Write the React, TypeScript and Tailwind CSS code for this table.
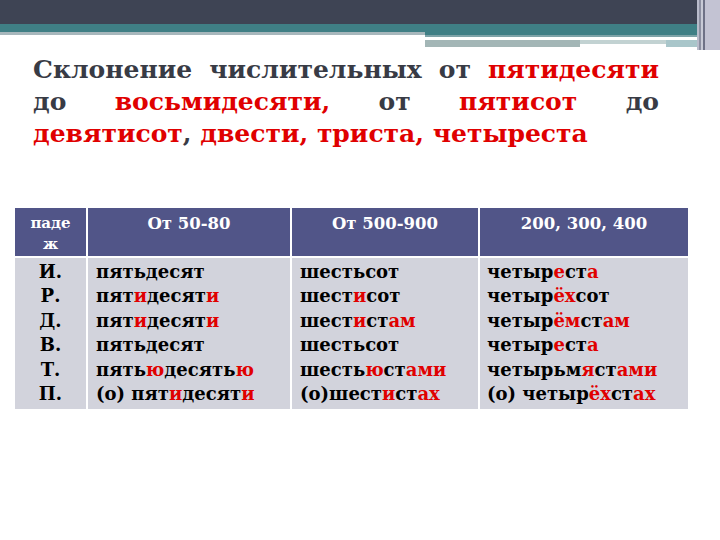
import React from "react";

type Seg = [string, boolean];

const R = "text-[#e00000]";

function Word({ segs }: { segs: Seg[] }) {
  return (
    <div className="whitespace-nowrap">
      {segs.map(([t, red], i) => (
        <span key={i} className={red ? R : ""}>
          {t}
        </span>
      ))}
    </div>
  );
}

const col2: Seg[][] = [
  [["пятьдесят", false]],
  [["пят", false], ["и", true], ["десят", false], ["и", true]],
  [["пят", false], ["и", true], ["десят", false], ["и", true]],
  [["пятьдесят", false]],
  [["пять", false], ["ю", true], ["десять", false], ["ю", true]],
  [["(о) пят", false], ["и", true], ["десят", false], ["и", true]],
];

const col3: Seg[][] = [
  [["шестьсот", false]],
  [["шест", false], ["и", true], ["сот", false]],
  [["шест", false], ["и", true], ["ст", false], ["ам", true]],
  [["шестьсот", false]],
  [["шесть", false], ["ю", true], ["ст", false], ["ами", true]],
  [["(о)шест", false], ["и", true], ["ст", false], ["ах", true]],
];

const col4: Seg[][] = [
  [["четыр", false], ["е", true], ["ст", false], ["а", true]],
  [["четыр", false], ["ёх", true], ["сот", false]],
  [["четыр", false], ["ём", true], ["ст", false], ["ам", true]],
  [["четыр", false], ["е", true], ["ст", false], ["а", true]],
  [["четырьм", false], ["я", true], ["ст", false], ["ами", true]],
  [["(о) четыр", false], ["ёх", true], ["ст", false], ["ах", true]],
];

const cases = ["И.", "Р.", "Д.", "В.", "Т.", "П."];

export default function App() {
  return (
    <div className="w-[720px] h-[540px] bg-white overflow-hidden font-['DejaVu_Serif','Liberation_Serif',serif]">
      {/* top decoration */}
      <div className="flex h-[50px]">
        <div className="flex-1 flex flex-col">
          <div className="h-[24px] bg-[#3e4454]" />
          <div className="h-[8px] bg-[#3f7f85]" />
          <div className="flex flex-1">
            <div className="w-[425px] flex flex-col">
              <div className="h-[3px] bg-[#a7b7bc]" />
            </div>
            <div className="flex-1 flex flex-col">
              <div className="h-[3px] bg-[#3f7f85]" />
              <div className="h-[2px] bg-[#7ea3a8]" />
              <div className="h-[3px] bg-white w-[241px]" />
              <div className="flex">
                <div className="h-[7px] w-[155px] bg-[#a3b6b6]" />
                <div className="h-[4px] w-[86px] bg-[#c2d2d2]" />
                <div className="h-[7px] flex-1 bg-[#a9c6ca]" />
              </div>
            </div>
          </div>
        </div>
        <div className="w-[8px] flex">
          <div className="w-[2px] bg-[#b9bccb]" />
          <div className="w-[2px] bg-[#8d90a2]" />
          <div className="w-[2px] bg-[#c8cad6]" />
          <div className="w-[2px] bg-[#6e7186]" />
        </div>
        <div className="w-[15px] bg-[#c3c3d3]" />
      </div>

      {/* title */}
      <div className="ml-[33px] w-[626px] mt-[4px] text-[25px] font-bold leading-[32px] text-[#383b45]">
        <div className="text-justify [text-align-last:justify]">
          Склонение числительных от <span className={R}>пятидесяти</span>
        </div>
        <div className="text-justify [text-align-last:justify]">
          до <span className={R}>восьмидесяти,</span> от{" "}
          <span className={R}>пятисот</span> до
        </div>
        <div>
          <span className={R}>девятисот</span>,{" "}
          <span className={R}>двести, триста, четыреста</span>
        </div>
      </div>

      {/* table */}
      <div className="ml-[15px] mt-[58px] w-[673px] grid grid-cols-[71px_202px_186px_208px] gap-[2px] bg-white">
        <div className="bg-[#515588] h-[48px] text-white text-[15px] font-bold leading-[21px] text-center pt-[5px]">
          паде
          <br />ж
        </div>
        <div className="bg-[#515588] h-[48px] text-white text-[16.5px] font-bold text-center pt-[4px]">
          От 50-80
        </div>
        <div className="bg-[#515588] h-[48px] text-white text-[16.5px] font-bold text-center pt-[4px]">
          От 500-900
        </div>
        <div className="bg-[#515588] h-[48px] text-white text-[16.5px] font-bold text-center pt-[4px]">
          200, 300, 400
        </div>

        <div className="bg-[#d2d3dc] pt-[2px] pb-[3px] text-black text-[18px] font-bold leading-[24.4px] text-center">
          {cases.map((c) => (
            <div key={c}>{c}</div>
          ))}
        </div>
        <div className="bg-[#d2d3dc] pt-[2px] pb-[3px] pl-[8px] text-black text-[18px] font-bold leading-[24.4px]">
          {col2.map((s, i) => (
            <Word key={i} segs={s} />
          ))}
        </div>
        <div className="bg-[#d2d3dc] pt-[2px] pb-[3px] pl-[8px] text-black text-[18px] font-bold leading-[24.4px]">
          {col3.map((s, i) => (
            <Word key={i} segs={s} />
          ))}
        </div>
        <div className="bg-[#d2d3dc] pt-[2px] pb-[3px] pl-[7px] text-black text-[18px] font-bold leading-[24.4px]">
          {col4.map((s, i) => (
            <Word key={i} segs={s} />
          ))}
        </div>
      </div>
    </div>
  );
}
